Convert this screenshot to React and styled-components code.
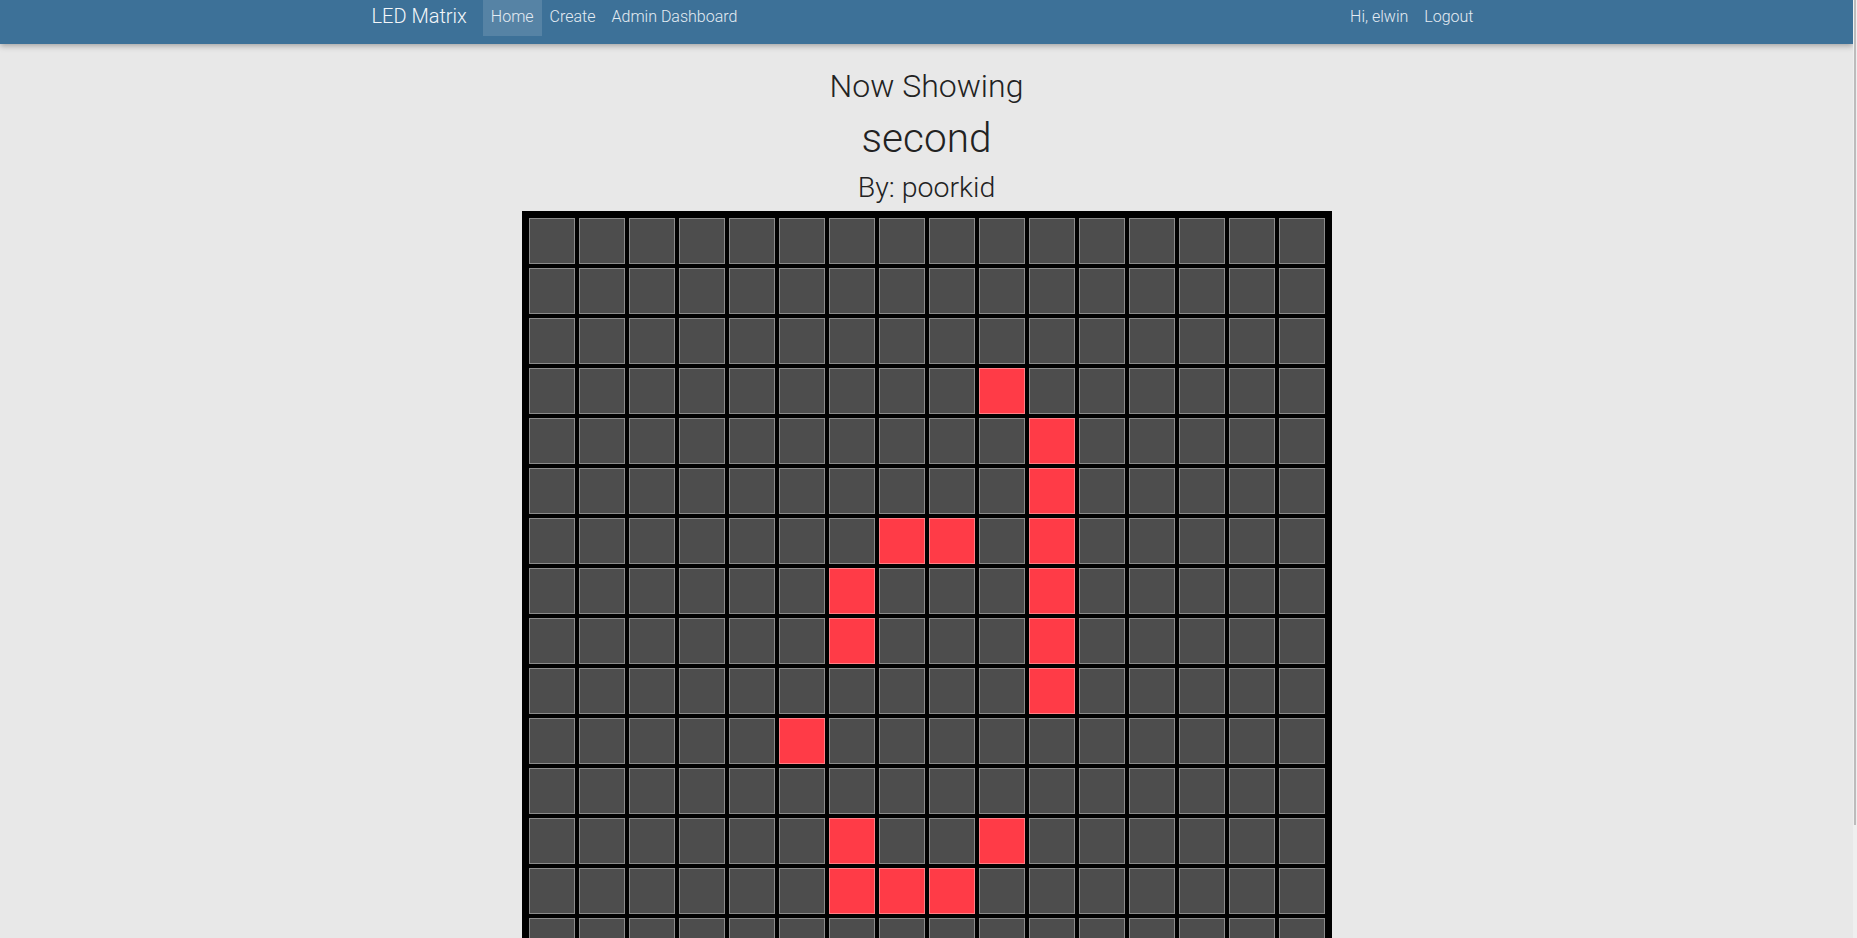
import styled, { createGlobalStyle } from 'styled-components';

const GlobalStyle = createGlobalStyle`
    html {
        scrollbar-width: none;
    }
    html::-webkit-scrollbar {
        display: none;
    }
    body {
        margin: 0 4px 0 0;
        background: #e8e8e8;
        font-family: Roboto, 'Liberation Sans', sans-serif;
        font-weight: 300;
        color: #222;
    }
`;

// stands in for the browser's thin scrollbar on the right edge
const ScrollTrack = styled.div({
    position: 'fixed',
    top: 0,
    right: 0,
    bottom: 0,
    width: '4px',
    background: '#efefef',
    display: 'flex',
    justifyContent: 'center',
});

const ScrollThumb = styled.div({
    width: '2px',
    height: '88%',
    background: '#bcbcbc',
});

const Navbar = styled.nav({
    height: '44px',
    background: '#3d7198',
    boxShadow: '0 2px 6px rgba(0, 0, 0, 0.3)',
    position: 'relative',
});

const NavContainer = styled.div({
    width: '1110px',
    margin: '0 auto',
    height: '100%',
    display: 'flex',
    alignItems: 'flex-start',
});

const Brand = styled.a({
    fontSize: '20px',
    color: '#f4f7fa',
    lineHeight: '32px',
    marginRight: '16px',
    textDecoration: 'none',
});

const NavList = styled.div({
    display: 'flex',
    marginLeft: (props) => (props.$right ? 'auto' : 0),
});

const NavLink = styled.a`
    display: block;
    padding: 0 8px;
    height: 36px;
    line-height: 33px;
    font-size: 16px;
    color: #e4ecf3;
    text-decoration: none;
    background: ${(props) => (props.$active ? 'rgba(255, 255, 255, 0.13)' : 'transparent')};
`;

const Main = styled.main({
    display: 'flex',
    flexDirection: 'column',
    alignItems: 'center',
    paddingTop: '25px',
    paddingBottom: '40px',
});

const Heading = styled.h2`
    margin: ${(props) => props.$margin || 0};
    font-size: ${(props) => props.$size};
    font-weight: 300;
    line-height: 1.1;
`;

const Matrix = styled.div({
    display: 'grid',
    gridTemplateColumns: 'repeat(16, 46px)',
    gridAutoRows: '46px',
    gap: '4px',
    padding: '7px',
    background: '#000',
});

const Led = styled.div`
    box-sizing: border-box;
    border: 1px solid rgba(255, 255, 255, 0.35);
    background: ${(props) => (props.$on ? '#ff3b47' : '#4d4d4d')};
`;

const litCells = [
    [3, 9], [4, 10], [5, 10],
    [6, 7], [6, 8], [6, 10],
    [7, 6], [7, 10], [8, 6], [8, 10],
    [9, 10], [10, 5],
    [12, 6], [12, 9],
    [13, 6], [13, 7], [13, 8],
];

const isLit = (row, col) => litCells.some(([r, c]) => r === row && c === col);

export default function App() {
    const cells = [];
    for (let row = 0; row < 16; row++) {
        for (let col = 0; col < 16; col++) {
            cells.push(<Led key={`${row}-${col}`} $on={isLit(row, col)} />);
        }
    }

    return (
        <>
            <GlobalStyle />
            <Navbar>
                <NavContainer>
                    <Brand href="#">LED Matrix</Brand>
                    <NavList>
                        <NavLink href="#" $active>Home</NavLink>
                        <NavLink href="#">Create</NavLink>
                        <NavLink href="#">Admin Dashboard</NavLink>
                    </NavList>
                    <NavList $right>
                        <NavLink href="#">Hi, elwin</NavLink>
                        <NavLink href="#">Logout</NavLink>
                    </NavList>
                </NavContainer>
            </Navbar>
            <Main>
                <Heading $size="32px">Now Showing</Heading>
                <Heading $size="40.5px" $margin="12px 0 0">second</Heading>
                <Heading $size="28.5px" $margin="11px 0 8px">By: poorkid</Heading>
                <Matrix>{cells}</Matrix>
            </Main>
            <ScrollTrack>
                <ScrollThumb />
            </ScrollTrack>
        </>
    );
}
